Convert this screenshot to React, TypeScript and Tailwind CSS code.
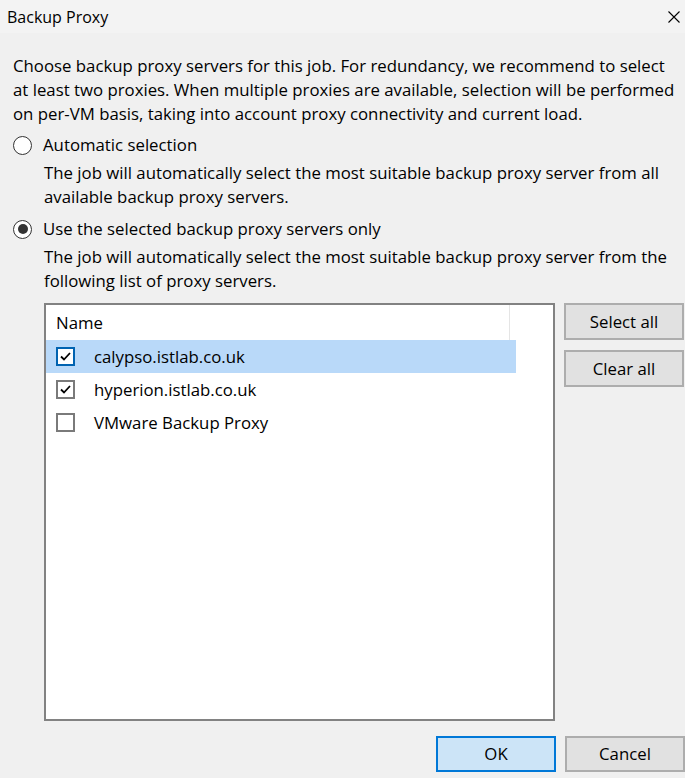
import React from "react";

const font = { fontFamily: '"Segoe UI", "Open Sans", "Noto Sans", sans-serif' };

function Check({ checked, focus }: { checked: boolean; focus?: boolean }) {
  return (
    <div
      className={`w-[19px] h-[19px] border-2 bg-white flex items-center justify-center shrink-0 ${
        focus ? "border-[#0063b1]" : "border-[#7a7a7a]"
      }`}
    >
      {checked && (
        <svg width="13" height="13" viewBox="0 0 13 13">
          <path d="M2 6.5 L5 9.5 L11 3" fill="none" stroke="#000" strokeWidth="1.8" />
        </svg>
      )}
    </div>
  );
}

function Radio({ on }: { on: boolean }) {
  return (
    <div className="w-[19px] h-[19px] rounded-full border-[1.5px] border-[#333] bg-white flex items-center justify-center shrink-0">
      {on && <div className="w-[10px] h-[10px] rounded-full bg-[#333]" />}
    </div>
  );
}

export default function App() {
  const rows = [
    { name: "calypso.istlab.co.uk", checked: true, sel: true },
    { name: "hyperion.istlab.co.uk", checked: true, sel: false },
    { name: "VMware Backup Proxy", checked: false, sel: false },
  ];
  return (
    <div className="w-[685px] h-[778px] bg-[#f0f0f0] text-black overflow-hidden flex flex-col" style={font}>
      <div className="h-[33px] bg-[#f3f3f3] flex items-center justify-between pl-[7px] pr-[5px] shrink-0">
        <span className="text-[16px] leading-none">Backup Proxy</span>
        <svg width="12" height="12" viewBox="0 0 12 12">
          <path d="M0.5 0.5 L11.5 11.5 M11.5 0.5 L0.5 11.5" stroke="#000" strokeWidth="1.1" />
        </svg>
      </div>
      <div className="pl-[13px] pt-[21px] flex flex-col text-[16.8px] leading-[24px] whitespace-nowrap">
        <p>
          Choose backup proxy servers for this job. For redundancy, we recommend to select
          <br />
          at least two proxies. When multiple proxies are available, selection will be performed
          <br />
          on per-VM basis, taking into account proxy connectivity and current load.
        </p>
        <div className="mt-[7px] flex items-center gap-[11px]">
          <Radio on={false} />
          <span>Automatic selection</span>
        </div>
        <p className="mt-[4px] pl-[31px]">
          The job will automatically select the most suitable backup proxy server from all
          <br />
          available backup proxy servers.
        </p>
        <div className="mt-[8px] flex items-center gap-[11px]">
          <Radio on={true} />
          <span>Use the selected backup proxy servers only</span>
        </div>
        <p className="mt-[4px] pl-[31px]">
          The job will automatically select the most suitable backup proxy server from the
          <br />
          following list of proxy servers.
        </p>
        <div className="mt-[10px] pl-[31px] flex gap-[9px]">
          <div className="w-[511px] h-[418px] border-2 border-[#828282] bg-white flex flex-col">
            <div className="h-[35px] flex items-center shrink-0">
              <div className="w-[464px] h-full flex items-center pl-[10px] border-r border-[#e5e5e5]">Name</div>
            </div>
            {rows.map((r) => (
              <div
                key={r.name}
                className={`w-[470px] h-[33px] flex items-center pl-[10px] gap-[19px] ${r.sel ? "bg-[#b9d9f9]" : ""}`}
              >
                <Check checked={r.checked} focus={r.sel} />
                <span>{r.name}</span>
              </div>
            ))}
          </div>
          <div className="flex flex-col gap-[10px]">
            <button className="w-[120px] h-[37px] border-2 border-[#adadad] bg-[#e1e1e1] flex items-center justify-center">
              Select all
            </button>
            <button className="w-[120px] h-[37px] border-2 border-[#adadad] bg-[#e1e1e1] flex items-center justify-center">
              Clear all
            </button>
          </div>
        </div>
        <div className="mt-[15px] flex justify-end gap-[9px]">
          <button className="w-[120px] h-[36px] border-2 border-[#0078d7] bg-[#cce4f7] flex items-center justify-center">
            OK
          </button>
          <button className="w-[120px] h-[36px] border-2 border-[#adadad] bg-[#e1e1e1] flex items-center justify-center">
            Cancel
          </button>
        </div>
      </div>
    </div>
  );
}
